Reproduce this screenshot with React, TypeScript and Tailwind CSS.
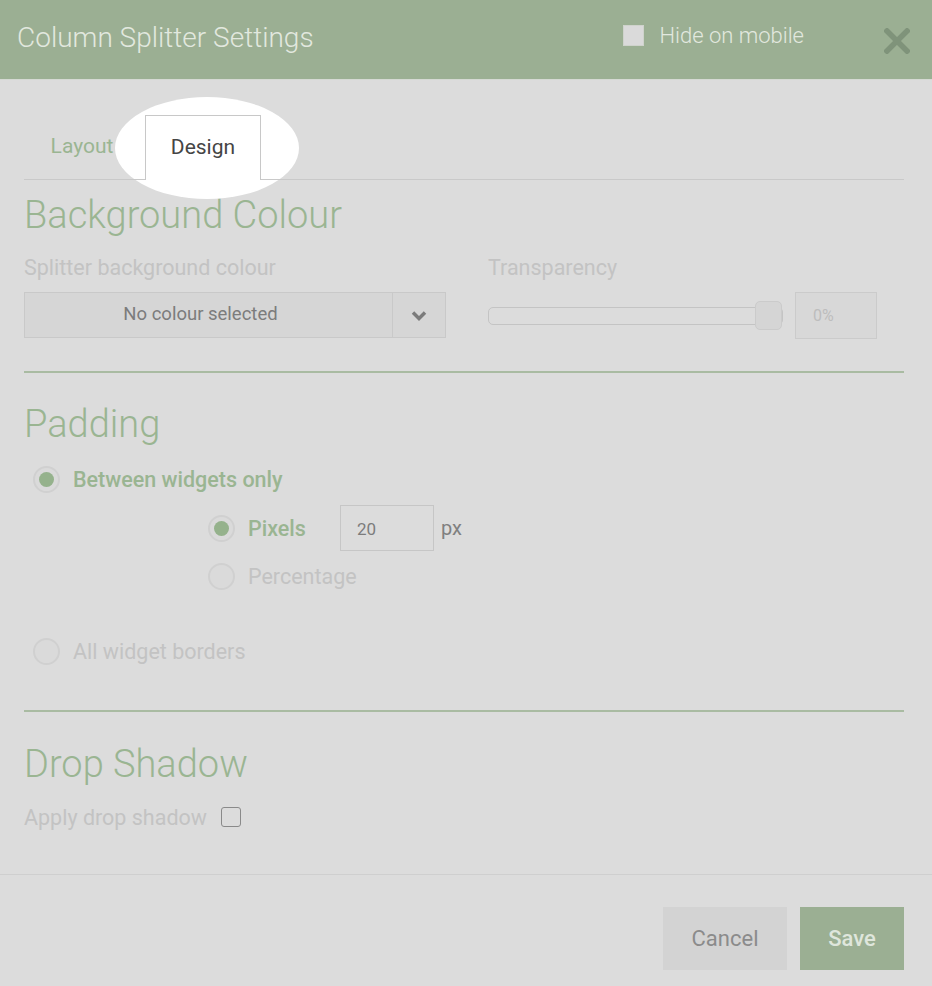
import React from 'react';

const green = 'text-[#9ab592]';

function Radio({ checked }: { checked?: boolean }) {
  return (
    <span className="w-[27px] h-[27px] rounded-full border-2 border-[#d0d0d0] bg-[#dadada] flex items-center justify-center shrink-0">
      {checked && <span className="w-[15px] h-[15px] rounded-full bg-[#95b28c]" />}
    </span>
  );
}

function Heading({ children }: { children: React.ReactNode }) {
  return <h2 className={`text-[38px] leading-[44px] font-light ${green}`}>{children}</h2>;
}

export default function App() {
  return (
    <div className="w-[932px] h-[986px] bg-[#dcdcdc] font-['Roboto',sans-serif] flex flex-col overflow-hidden">
      {/* header */}
      <div className="h-[80px] bg-[#9baf93] flex items-center pl-[17px] pr-[22px] border-b border-[#d5d9d3] shrink-0">
        <h1 className="text-[28px] font-light text-[#e2e8df] mb-[4px]">Column Splitter Settings</h1>
        <label className="ml-auto flex items-center mb-[8px]">
          <span className="w-[21px] h-[21px] bg-[#dadada] border border-[#cfd3cc]" />
          <span className="ml-[15px] text-[22px] font-light text-[#e2e8df]">Hide on mobile</span>
        </label>
        <button className="ml-[80px] mt-[2px]">
          <svg width="26" height="26" viewBox="0 0 26 26">
            <path d="M3 3L23 23M23 3L3 23" stroke="#7f937a" strokeWidth="5.5" strokeLinecap="square" />
          </svg>
        </button>
      </div>

      <div className="flex-1 flex flex-col pl-[24px] pr-[28px]">
        {/* tabs */}
        <div className="relative isolate mt-[34px]">
          <div className="absolute left-[91px] top-[-17px] w-[184px] h-[102px] rounded-[50%] bg-white z-0" />
          <div className="relative z-10 flex items-end h-[65px]">
            <div className={`w-[116px] h-full flex items-center justify-center text-[21px] ${green}`}>Layout</div>
            <div className="ml-[5px] w-[116px] h-full flex items-center justify-center bg-white border border-b-0 border-[#c8c8c8] text-[21px] text-[#454545] translate-y-[1px]">
              Design
            </div>
          </div>
          <div className="relative z-[5] h-px bg-[#c9c9c9]" />
        </div>

        {/* background colour */}
        <div className="mt-[13px]">
          <Heading>Background Colour</Heading>
        </div>
        <div className="flex mt-[19px]">
          <div className="w-[422px]">
            <div className="text-[21.5px] leading-[24px] text-[#c3c3c3]">Splitter background colour</div>
            <div className="mt-[12px] h-[46px] flex border border-[#c9c9c9] bg-[#d6d6d6]">
              <div className="flex-1 flex items-center justify-center pr-[16px] text-[18.5px] text-[#7c7c7c]">No colour selected</div>
              <div className="w-[53px] border-l border-[#c9c9c9] flex items-center justify-center">
                <svg width="16" height="11" viewBox="0 0 16 11">
                  <path d="M2 2.5L8 8.5L14 2.5" fill="none" stroke="#7b7b7b" strokeWidth="3.5" />
                </svg>
              </div>
            </div>
          </div>
          <div className="ml-[42px] flex-1">
            <div className="text-[21.5px] leading-[24px] text-[#c3c3c3]">Transparency</div>
            <div className="mt-[12px] flex items-center">
              <div className="relative w-[295px] h-[18px] rounded-[5px] border border-[#c4c4c4] bg-[#dcdcdc]">
                <div className="absolute right-0 top-[-7px] w-[27px] h-[29px] rounded-[5px] border border-[#cbcbcb] bg-[#d5d5d5]" />
              </div>
              <div className="ml-[12px] w-[82px] h-[47px] border border-[#cbcbcb] bg-[#d8d8d8] flex items-center pl-[17px] text-[16px] text-[#bdbdbd]">0%</div>
            </div>
          </div>
        </div>

        <div className="mt-[32px] h-[2px] bg-[#a9bba2]" />

        {/* padding */}
        <div className="mt-[29px]">
          <Heading>Padding</Heading>
        </div>
        <label className="mt-[20px] ml-[9px] flex items-center h-[27px]">
          <Radio checked />
          <span className={`ml-[13px] text-[21.5px] leading-[27px] font-medium ${green}`}>Between widgets only</span>
        </label>
        <div className="ml-[184px] mt-[12px] flex flex-col">
          <div className="flex items-center h-[46px]">
            <Radio checked />
            <span className={`ml-[13px] w-[92px] text-[21.5px] leading-[27px] font-medium ${green}`}>Pixels</span>
            <div className="w-[94px] h-[46px] border border-[#c6c6c6] bg-[#dcdcdc] flex items-center pl-[16px] pt-[3px] text-[17px] text-[#7c7c7c]">20</div>
            <span className="ml-[7px] text-[20px] text-[#808080]">px</span>
          </div>
          <div className="flex items-center h-[27px] mt-[12px]">
            <Radio />
            <span className="ml-[13px] text-[21.5px] leading-[27px] text-[#c3c3c3]">Percentage</span>
          </div>
        </div>
        <label className="mt-[48px] ml-[9px] flex items-center h-[27px]">
          <Radio />
          <span className="ml-[13px] text-[21.5px] leading-[27px] text-[#c3c3c3]">All widget borders</span>
        </label>

        <div className="mt-[45px] h-[2px] bg-[#a9bba2]" />

        {/* drop shadow */}
        <div className="mt-[30px]">
          <Heading>Drop Shadow</Heading>
        </div>
        <label className="mt-[20px] flex items-center h-[24px]">
          <span className="text-[21.5px] leading-[24px] text-[#c3c3c3]">Apply drop shadow</span>
          <span className="ml-[14px] w-[20px] h-[20px] rounded-[3px] border-[1.5px] border-[#8a8a8a] -mt-[3px]" />
        </label>
      </div>

      {/* footer */}
      <div className="border-t border-[#cfcfcf] h-[112px] flex items-start justify-end pt-[32px] pr-[28px] gap-[13px] shrink-0">
        <button className="w-[124px] h-[63px] bg-[#d3d3d3] text-[22px] text-[#8b8b8b]">Cancel</button>
        <button className="w-[104px] h-[63px] bg-[#9baf93] text-[22px] font-medium text-[#dfe6dc]">Save</button>
      </div>
    </div>
  );
}
